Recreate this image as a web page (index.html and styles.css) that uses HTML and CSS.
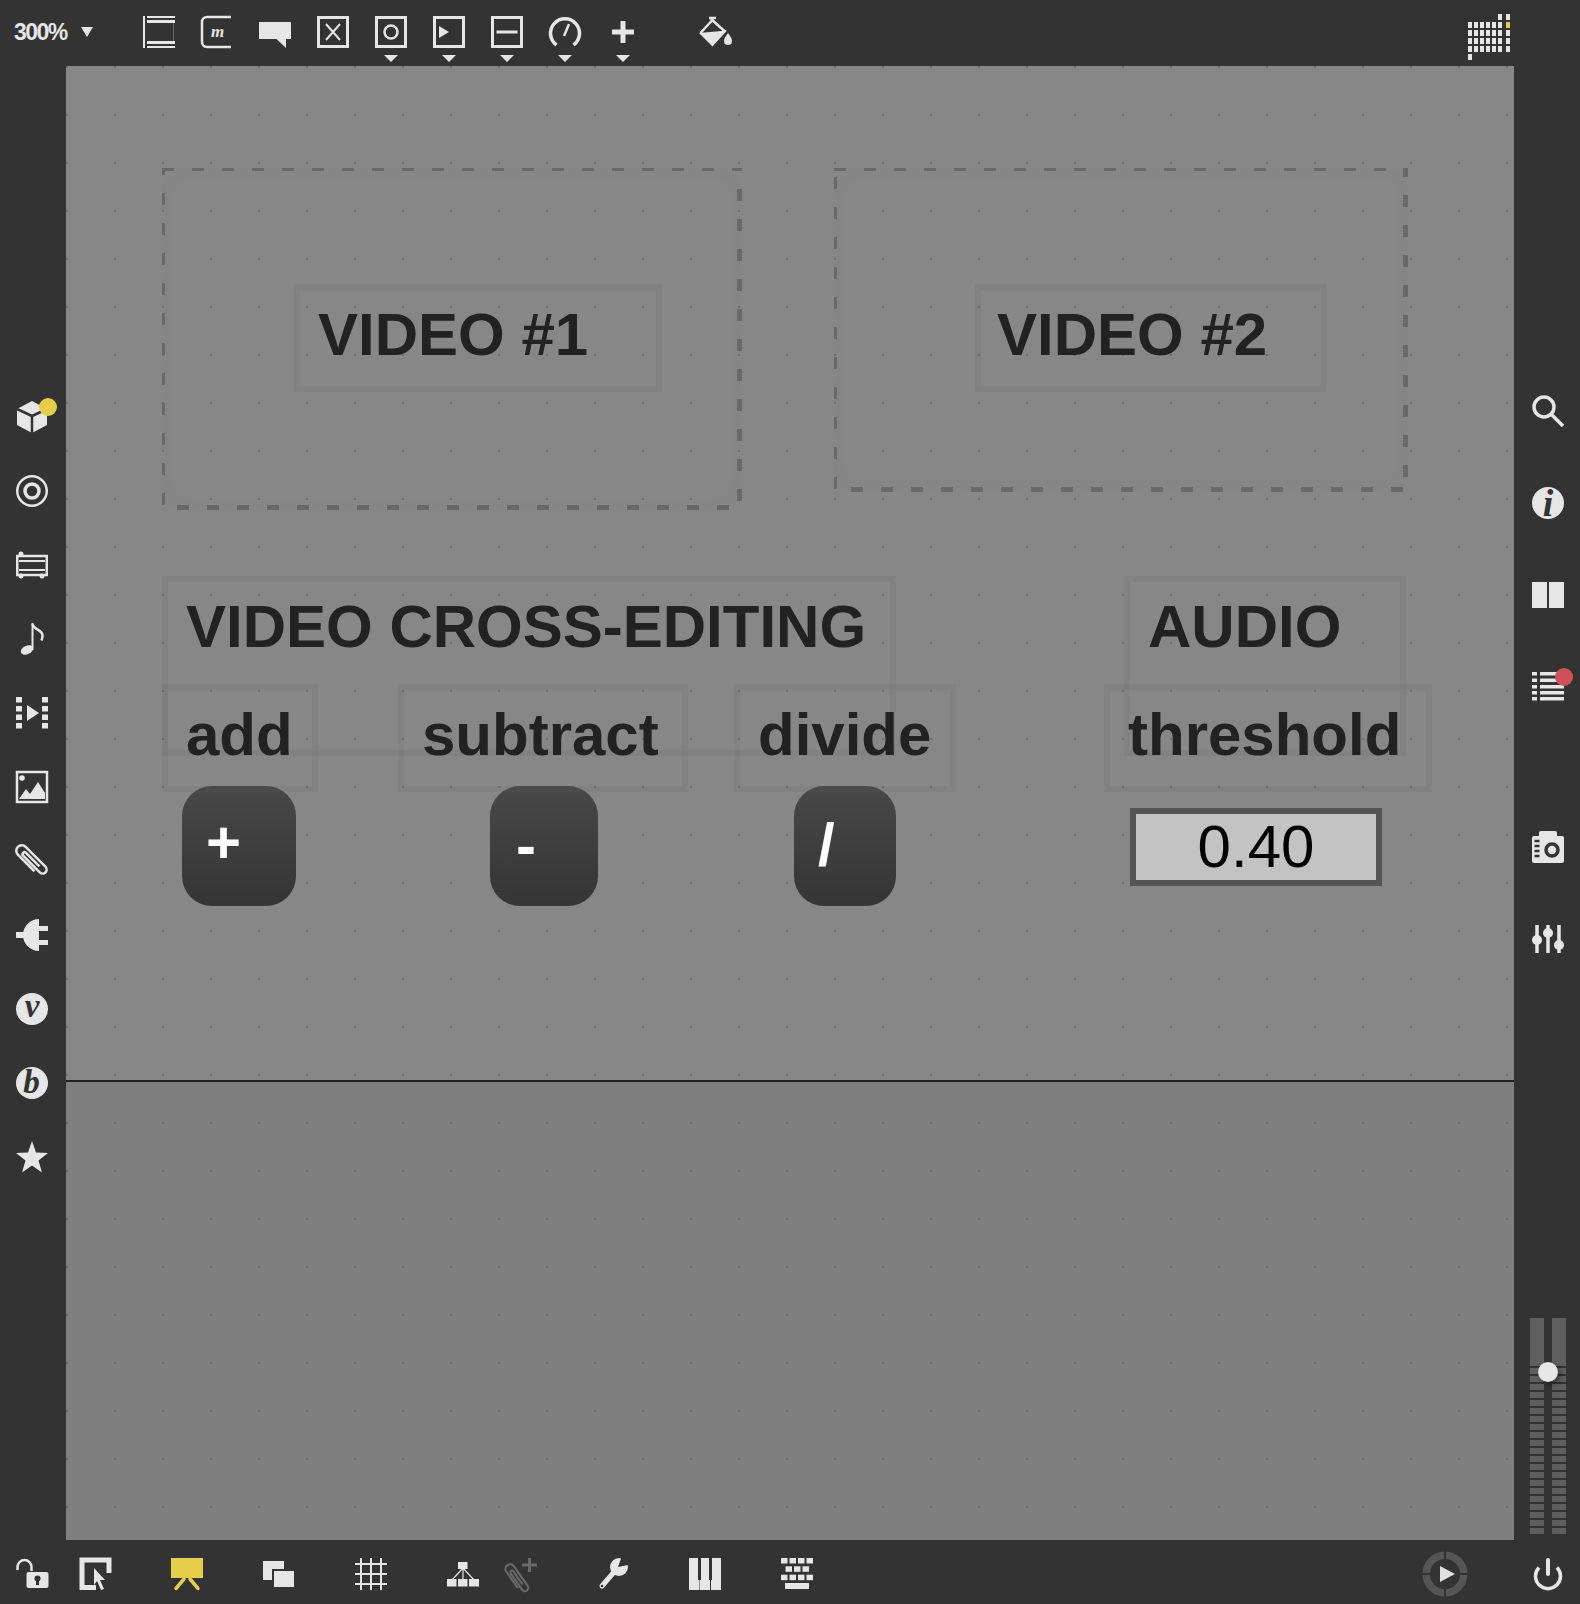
FILE: index.html
```html
<!DOCTYPE html>
<html lang="en">
<head>
  <meta charset="UTF-8">
  <title>Patcher</title>
  <link rel="stylesheet" href="styles.css">
</head>
<body>
<div class="window">

  <header class="top-bar">
    <div class="zoom-menu"><span>300%</span><i class="zoom-caret"></i></div>

    <svg class="icon" viewBox="0 0 32 32"><rect width="2" height="32"/><rect x="4" width="28" height="2"/><rect x="4" y="4" width="28" height="3"/><rect x="4" y="25" width="28" height="3"/><rect x="4" y="30" width="28" height="2"/><rect x="30" y="7" width="1" height="18" opacity=".3"/></svg>
    <svg class="icon" viewBox="0 0 32 32"><path class="line" d="M30 1H6a5 5 0 0 0-5 5v20a5 5 0 0 0 5 5h24"/><text class="glyph-m" x="10" y="21">m</text></svg>
    <svg class="icon" viewBox="0 0 32 32"><path d="M0 6h32v17h-5v9l-9.500-9H0z"/></svg>
    <svg class="icon" viewBox="0 0 32 32"><rect class="line box" x="1.500" y="1.500" width="29" height="29"/><path class="thin" d="M9 8l14 16M23 8L9 24"/></svg>
    <div class="tool-drop"><svg class="icon" viewBox="0 0 32 32"><rect class="line box" x="1.500" y="1.500" width="29" height="29"/><circle class="line" cx="16" cy="16" r="6.500"/></svg><i class="caret"></i></div>
    <div class="tool-drop"><svg class="icon" viewBox="0 0 32 32"><rect class="line box" x="1.500" y="1.500" width="29" height="29"/><path d="M6 10l10 6-10 6z"/></svg><i class="caret"></i></div>
    <div class="tool-drop"><svg class="icon" viewBox="0 0 32 32"><rect class="line box" x="1.500" y="1.500" width="29" height="29"/><rect x="5.500" y="14.500" width="21" height="3"/></svg><i class="caret"></i></div>
    <div class="tool-drop"><svg class="icon" viewBox="0 0 32 32"><path class="line thick" d="M7.500 29A14.500 14.500 0 1 1 24.500 29"/><path class="line" d="M20 8l-5 12"/></svg><i class="caret"></i></div>
    <div class="tool-drop"><svg class="icon" viewBox="0 0 32 32"><path d="M13.500 5h5v8.500H27v5h-8.500V27h-5v-8.500H5v-5h8.500z"/></svg><i class="caret"></i></div>

    <svg class="icon paint" viewBox="0 0 32 32"><path class="line" d="M10 2l7 0M1.500 17L13 4.500M12 3l14.500 13"/><path d="M0 17L13.500 30.500 28 14.500z"/><path d="M29 17c3 4 4 6 4 8a4 4 0 0 1-8 0c0-2 1-4 4-8z"/></svg>

    <svg class="grid-meter" viewBox="0 0 42 46">
      <rect x="30" width="4" height="6"/><rect x="38" width="4" height="6"/>
      <rect y="8" width="4" height="6"/><rect x="6" y="8" width="4" height="6"/><rect x="12" y="8" width="4" height="6"/><rect x="18" y="8" width="4" height="6"/><rect x="24" y="8" width="4" height="6"/><rect x="30" y="8" width="4" height="6"/><rect class="yellow" x="38" y="8" width="4" height="6"/>
      <rect y="16" width="4" height="6"/><rect x="6" y="16" width="4" height="6"/><rect x="12" y="16" width="4" height="6"/><rect x="18" y="16" width="4" height="6"/><rect x="24" y="16" width="4" height="6"/><rect x="30" y="16" width="4" height="6"/><rect x="38" y="16" width="4" height="6"/>
      <rect y="24" width="4" height="6"/><rect x="6" y="24" width="4" height="6"/><rect x="12" y="24" width="4" height="6"/><rect x="18" y="24" width="4" height="6"/><rect x="24" y="24" width="4" height="6"/><rect x="30" y="24" width="4" height="6"/><rect x="38" y="24" width="4" height="6"/>
      <rect y="32" width="4" height="6"/><rect x="6" y="32" width="4" height="6"/><rect x="12" y="32" width="4" height="6"/><rect x="18" y="32" width="4" height="6"/><rect x="24" y="32" width="4" height="6"/><rect x="30" y="32" width="4" height="6"/><rect x="38" y="32" width="4" height="6"/>
      <rect y="40" width="4" height="6"/>
    </svg>
  </header>

  <nav class="left-rail">
    <svg class="icon" viewBox="0 0 32 32"><path d="M16 0l15 8v16l-15 8-15-8V8z"/><path class="cut" d="M1 8l15 7 15-7M16 15v17"/><circle class="yellow" cx="32" cy="6" r="9"/></svg>
    <svg class="icon" viewBox="0 0 32 32"><circle class="line" cx="16" cy="16" r="14.750"/><circle class="line thick" cx="16" cy="16" r="7"/></svg>
    <svg class="icon" viewBox="0 0 32 32"><circle cx="5" cy="5" r="2.500"/><circle cx="5" cy="27" r="2.500"/><circle cx="26" cy="27" r="2.500"/><rect class="line" x="1.250" y="7" width="29.500" height="19"/><rect x="3" y="11" width="26" height="2"/><rect x="3" y="20" width="26" height="2"/></svg>
    <svg class="icon" viewBox="0 0 32 32"><ellipse cx="11" cy="27" rx="6.500" ry="4.200" transform="rotate(-25 11 27)"/><rect x="15.500" width="2" height="27"/><path class="line" d="M16.500 1c1 6 10 5.500 10 11.500 0 2-.5 3.500-1 5"/></svg>
    <svg class="icon" viewBox="0 0 32 32"><rect width="6" height="5.500"/><rect y="9" width="6" height="5.500"/><rect y="17.500" width="6" height="5.500"/><rect y="26" width="6" height="5.500"/><rect x="26" width="6" height="5.500"/><rect x="26" y="9" width="6" height="5.500"/><rect x="26" y="17.500" width="6" height="5.500"/><rect x="26" y="26" width="6" height="5.500"/><path d="M11 8l12 8-12 8z"/></svg>
    <svg class="icon" viewBox="0 0 32 32"><rect class="line" x="1" y="1" width="30" height="30"/><circle cx="6" cy="7" r="2.800"/><path d="M3 28l7-10 4 5 8-12 7 11v6z"/></svg>
    <svg class="icon" viewBox="0 0 32 32"><g transform="rotate(45 16 16)"><path class="line" d="M25 21.500H1.500a5.500 5.500 0 0 1 0-11h28a4 4 0 0 1 0 8H6a1.800 1.800 0 0 1 0-4h19"/></g></svg>
    <svg class="icon" viewBox="0 0 32 32"><rect y="13" width="8" height="6"/><path d="M23 0a16 16 0 0 0 0 32z"/><rect x="23" y="7" width="9" height="5"/><rect x="23" y="21" width="9" height="5"/></svg>
    <svg class="icon" viewBox="0 0 32 32"><circle cx="16" cy="16" r="16"/><text class="glyph-round" x="16" y="24">v</text></svg>
    <svg class="icon" viewBox="0 0 32 32"><circle cx="16" cy="16" r="16"/><text class="glyph-round" x="15.500" y="26">b</text></svg>
    <svg class="icon" viewBox="0 0 32 32"><path d="M16 0l4 11.500 12 .5-9.500 7.500 3.500 12-10-7-10 7 3.500-12L0 12l12-.5z"/></svg>
  </nav>

  <main class="canvas">
    <div class="frame frame-one"></div>
    <div class="frame frame-two"></div>

    <button class="pad pad-add" type="button">+</button>
    <button class="pad pad-subtract" type="button">-</button>
    <button class="pad pad-divide" type="button">/</button>

    <div class="comment label-video-one">VIDEO #1</div>
    <div class="comment label-video-two">VIDEO #2</div>
    <div class="comment label-cross">VIDEO CROSS-EDITING</div>
    <div class="comment label-audio">AUDIO</div>
    <div class="comment label-add">add</div>
    <div class="comment label-subtract">subtract</div>
    <div class="comment label-divide">divide</div>
    <div class="comment label-threshold">threshold</div>

    <div class="number-box">0.40</div>
  </main>

  <aside class="right-rail">
    <svg class="icon" viewBox="0 0 32 32"><circle class="line thick" cx="12" cy="12" r="10"/><path class="line thick" d="M19.500 19.500L31 31"/></svg>
    <svg class="icon" viewBox="0 0 32 32"><circle cx="16" cy="16" r="16"/><text class="glyph-round glyph-i" x="16" y="29">i</text></svg>
    <svg class="icon" viewBox="0 0 32 32"><rect y="3" width="15" height="26"/><rect x="17" y="3" width="15" height="26"/></svg>
    <svg class="icon" viewBox="0 0 32 32"><rect y="1" width="5" height="3.500"/><rect x="8" y="1" width="24" height="3.500"/><rect y="7.500" width="5" height="3.500"/><rect x="8" y="7.500" width="24" height="3.500"/><rect y="14" width="5" height="3.500"/><rect x="8" y="14" width="24" height="3.500"/><rect y="20" width="5" height="3.500"/><rect x="8" y="20" width="24" height="3.500"/><rect y="26" width="5" height="3.500"/><rect x="8" y="26" width="24" height="3.500"/><circle class="red" cx="32" cy="6" r="9"/></svg>
    <svg class="icon camera" viewBox="0 0 32 32"><path d="M7 5V2a2 2 0 0 1 2-2h14a2 2 0 0 1 2 2v3h5a2 2 0 0 1 2 2v23a2 2 0 0 1-2 2H2a2 2 0 0 1-2-2V7a2 2 0 0 1 2-2z"/><circle class="cut lens" cx="20" cy="19" r="6"/><path class="cut" d="M2.500 10h5M2.500 15h5M2.500 20h5M2.500 25h5"/></svg>
    <svg class="icon" viewBox="0 0 32 32"><path class="line thick" d="M5 2v28M16 2v28M27 2v28"/><circle cx="5" cy="17" r="5"/><circle cx="16" cy="10" r="5"/><circle cx="27" cy="22" r="5"/></svg>

    <div class="meter">
      <div class="meter-col"></div>
      <div class="meter-col"></div>
      <div class="meter-knob"></div>
    </div>
  </aside>

  <footer class="bottom-bar">
    <svg class="icon lock" viewBox="0 0 32 32"><path class="line" d="M1.500 12V9a7 7 0 0 1 14 0v4"/><rect x="10.500" y="14" width="22" height="16" rx="2"/><circle class="hole" cx="21.500" cy="20.500" r="3"/><rect class="hole" x="20" y="21" width="3" height="6"/></svg>
    <svg class="icon select" viewBox="0 0 32 32"><path class="line heavy" d="M30 15V2H3v27.500h14"/><path d="M15 10l11 12h-5l4 9-3 1-4-9-3 4z"/></svg>
    <svg class="icon" viewBox="0 0 32 32"><rect class="yellow" width="32" height="20"/><path class="yellow-line" d="M13 21L5 30.500M19 21l8 9.500"/></svg>
    <svg class="icon" viewBox="0 0 32 32"><rect y="3" width="21" height="19"/><rect class="front" x="10" y="12" width="22" height="18"/></svg>
    <svg class="icon" viewBox="0 0 32 32"><path class="thin" d="M6 0v32M16 0v32M26 0v32M0 6h32M0 16h32M0 26h32"/></svg>
    <svg class="icon" viewBox="0 0 32 32"><rect x="11" y="4" width="9.500" height="7"/><rect y="21" width="9.500" height="7.500"/><rect x="11" y="21" width="9.500" height="7.500"/><rect x="22" y="21" width="10" height="7.500"/><path class="hair" d="M16 10L5 22M16 10v12M16 10l11 12"/></svg>
    <svg class="icon clip-add" viewBox="0 0 32 32"><g transform="rotate(55 11 20) translate(-1 6) scale(.85)"><path class="line" d="M25 21.500H1.500a5.500 5.500 0 0 1 0-11h28a4 4 0 0 1 0 8H6a1.800 1.800 0 0 1 0-4h19"/></g><path d="M23 0h3v5.500h6v3h-6V14h-3V8.500h-6v-3h6z"/></svg>
    <svg class="icon" viewBox="0 0 32 32"><path class="line wrench-handle" d="M5 28L17 14"/><circle cx="22" cy="9" r="9"/><path class="wrench-bite" d="M21 9l5-14 10 4-5 8z"/><circle class="hole" cx="5" cy="28" r="1.300"/></svg>
    <svg class="icon" viewBox="0 0 32 32"><path d="M0 0h9v22h1.500v10H0zM12 0h8v22h1v10H11V22h1zM23 0h9v32H22V22h1z"/></svg>
    <svg class="icon" viewBox="0 0 32 32"><rect width="6.500" height="5.500"/><rect x="8.500" width="6.500" height="5.500"/><rect x="17" width="6.500" height="5.500"/><rect x="25.500" width="6.500" height="5.500"/><rect x="4.500" y="8.300" width="6.500" height="5.500"/><rect x="13" y="8.300" width="6.500" height="5.500"/><rect x="21.500" y="8.300" width="6.500" height="5.500"/><rect y="16.700" width="6.500" height="5.500"/><rect x="8.500" y="16.700" width="6.500" height="5.500"/><rect x="17" y="16.700" width="6.500" height="5.500"/><rect x="25.500" y="16.700" width="6.500" height="5.500"/><rect x="4" y="25" width="24" height="6"/></svg>

    <svg class="play" viewBox="0 0 46 46"><circle class="play-ring" cx="23" cy="23" r="18.800"/><path class="play-cross" d="M23 0v46M0 23h46"/><path class="play-tri" d="M18 15l15 8-15 8z"/></svg>
    <svg class="icon power" viewBox="0 0 32 32"><path class="line thick" d="M7 9.500a12.500 12.500 0 1 0 18 0"/><path class="line power-bar" d="M16 2v14"/></svg>
  </footer>

</div>
</body>
</html>
```

FILE: styles.css
```css
* {
  box-sizing: border-box;
}
body {
  margin: 0;
  background: #333;
  font-family: "Liberation Sans", Arial, sans-serif;
}
.window {
  display: grid;
  grid-template-columns: 66px 1fr 66px;
  grid-template-rows: 66px 1fr 64px;
  width: 1580px;
  height: 1604px;
  overflow: hidden;
  background: #333;
}

/* icons */
svg {
  display: block;
  flex: none;
  overflow: visible;
  fill: #e6e6e6;
}
.icon {
  width: 32px;
  height: 32px;
}
.line {
  fill: none;
  stroke: #e6e6e6;
  stroke-width: 2.5;
}
.box {
  stroke-width: 3;
}
.thick {
  stroke-width: 3.5;
}
.heavy {
  stroke-width: 5;
}
.thin {
  fill: none;
  stroke: #e6e6e6;
  stroke-width: 2;
}
.hair {
  fill: none;
  stroke: #e6e6e6;
  stroke-width: 1.2;
}
.cut {
  fill: none;
  stroke: #333;
  stroke-width: 2.5;
}
.lens {
  stroke-width: 3.5;
}
.hole {
  fill: #333;
}
.yellow {
  fill: #e6cd4a;
}
.red {
  fill: #cf5058;
}
.yellow-line {
  fill: none;
  stroke: #e6cd4a;
  stroke-width: 3.5;
  stroke-linecap: round;
}
.front {
  stroke: #333;
  stroke-width: 2;
}
.glyph-m {
  font: italic bold 17px "Liberation Serif", serif;
  fill: #e6e6e6;
}
.glyph-round {
  font: italic bold 33px "Liberation Serif", serif;
  text-anchor: middle;
  fill: #333;
}
.glyph-i {
  font-size: 38px;
}

/* top bar */
.top-bar {
  grid-column: 1 / 4;
  display: flex;
  gap: 26px;
  padding: 16px 70px 0 14px;
}
.zoom-menu {
  display: flex;
  align-items: center;
  gap: 14px;
  width: 103px;
  height: 32px;
  color: #e6e6e6;
  font-size: 23px;
  font-weight: bold;
  letter-spacing: -1.5px;
}
.zoom-caret {
  width: 0;
  height: 0;
  border-left: 6px solid transparent;
  border-right: 6px solid transparent;
  border-top: 10px solid #e6e6e6;
}
.tool-drop {
  position: relative;
  width: 32px;
  height: 32px;
}
.caret {
  position: absolute;
  left: 9px;
  top: 39px;
  width: 0;
  height: 0;
  border-left: 7px solid transparent;
  border-right: 7px solid transparent;
  border-top: 7px solid #e6e6e6;
}
.paint {
  margin-left: 34px;
}
.grid-meter {
  width: 42px;
  height: 46px;
  margin: -2px 0 0 auto;
}

/* side rails */
.left-rail {
  display: flex;
  flex-direction: column;
  gap: 42px;
  padding: 335px 0 0 16px;
}
.right-rail {
  display: flex;
  flex-direction: column;
  gap: 60px;
  padding: 329px 0 6px 18px;
}
.camera {
  margin-top: 68px;
}
.meter {
  position: relative;
  display: flex;
  gap: 8px;
  width: 36px;
  height: 216px;
  margin: auto 0 0 -2px;
}
.meter-col {
  width: 14px;
  background:
    linear-gradient(#5e5e5e, #5e5e5e) top / 100% 48px no-repeat,
    repeating-linear-gradient(0deg, #5e5e5e 0 6px, transparent 6px 8px);
}
.meter-knob {
  position: absolute;
  left: 8px;
  top: 44px;
  width: 20px;
  height: 20px;
  border-radius: 50%;
  background: #e6e6e6;
  box-shadow: 3px 3px 4px rgba(0, 0, 0, .35);
}

/* bottom bar */
.bottom-bar {
  grid-column: 1 / 4;
  display: flex;
  padding: 18px 16px 0 16px;
}
.bottom-bar > .icon {
  margin-left: 60px;
}
.bottom-bar > .lock {
  margin-left: 0;
}
.bottom-bar > .select {
  margin-left: 31px;
}
.bottom-bar > .clip-add {
  margin-left: 26px;
  fill: #696969;
}
.clip-add .line {
  stroke: #696969;
}
.wrench-handle {
  stroke-width: 5;
  stroke-linecap: round;
}
.wrench-bite {
  fill: #333;
}
.play {
  width: 46px;
  height: 46px;
  margin: -7px 0 0 auto;
}
.play-ring {
  fill: none;
  stroke: #555;
  stroke-width: 7.500;
}
.play-cross {
  fill: none;
  stroke: #333;
  stroke-width: 2;
}
.play-tri {
  fill: #e0e0e0;
}
.bottom-bar > .power {
  margin-left: 64px;
}
.power-bar {
  stroke-width: 4;
  stroke-linecap: round;
}

/* patcher canvas */
.canvas {
  position: relative;
  background:
    radial-gradient(circle at 1px 1px, #6e6e6e 1px, transparent 1px) 0 0 / 48px 48px,
    linear-gradient(#878787 0 1014px, #222 1014px 1016px, #7f7f7f 1016px);
}
.frame {
  --dash: #696969;
  position: absolute;
  background:
    repeating-linear-gradient(90deg, var(--dash) 0 12px, transparent 12px 30px) 0 0 / 100% 3px no-repeat,
    repeating-linear-gradient(90deg, var(--dash) calc(var(--bottom) - 30px) calc(var(--bottom) - 18px), transparent calc(var(--bottom) - 18px) var(--bottom)) 0 100% / 100% var(--edge) no-repeat,
    repeating-linear-gradient(180deg, var(--dash) calc(var(--left) - 30px) calc(var(--left) - 18px), transparent calc(var(--left) - 18px) var(--left)) 0 0 / 3px 100% no-repeat,
    repeating-linear-gradient(180deg, var(--dash) calc(var(--right) - 30px) calc(var(--right) - 18px), transparent calc(var(--right) - 18px) var(--right)) 100% 0 / var(--edge) 100% no-repeat;
}
.frame::before {
  content: "";
  position: absolute;
  inset: 0;
  border: 11px solid rgba(108, 108, 108, .05);
  border-radius: 24px;
}
.frame-one {
  --left: 25px;
  --right: 21px;
  --bottom: 15px;
  --edge: 5px;
  left: 96px;
  top: 102px;
  width: 580px;
  height: 342px;
}
.frame-two {
  --left: 9px;
  --right: 27px;
  --bottom: 17px;
  --edge: 5px;
  left: 768px;
  top: 102px;
  width: 574px;
  height: 324px;
}
.comment {
  position: absolute;
  height: 108px;
  padding: 10px 18px;
  border: 6px solid rgba(100, 100, 100, .14);
  color: #222;
  font-size: 60px;
  font-weight: bold;
  white-space: nowrap;
}
.label-video-one {
  left: 228px;
  top: 218px;
  width: 368px;
}
.label-video-two {
  left: 909px;
  top: 218px;
  width: 352px;
  padding-left: 16px;
}
.label-cross {
  left: 96px;
  top: 510px;
  width: 734px;
  height: 180px;
}
.label-audio {
  left: 1058px;
  top: 510px;
  width: 282px;
  height: 180px;
}
.label-add {
  left: 96px;
  top: 618px;
  width: 156px;
}
.label-subtract {
  left: 332px;
  top: 618px;
  width: 290px;
}
.label-divide {
  left: 668px;
  top: 618px;
  width: 222px;
}
.label-threshold {
  left: 1038px;
  top: 618px;
  width: 328px;
}
.pad {
  position: absolute;
  top: 720px;
  height: 120px;
  padding: 0 0 0 24px;
  border: none;
  border-radius: 30px;
  background: linear-gradient(#484848, #353535);
  color: #fff;
  font: bold 60px "Liberation Sans", Arial, sans-serif;
  text-align: left;
}
.pad-add {
  left: 116px;
  width: 114px;
  padding-bottom: 8px;
}
.pad-subtract {
  left: 424px;
  width: 108px;
  padding-left: 26px;
  padding-bottom: 2px;
}
.pad-divide {
  left: 728px;
  width: 102px;
  padding-bottom: 4px;
}
.number-box {
  position: absolute;
  left: 1064px;
  top: 742px;
  width: 252px;
  height: 78px;
  border: 6px solid #555;
  background: #c3c3c3;
  color: #000;
  font-size: 60px;
  line-height: 66px;
  text-align: center;
}
```
